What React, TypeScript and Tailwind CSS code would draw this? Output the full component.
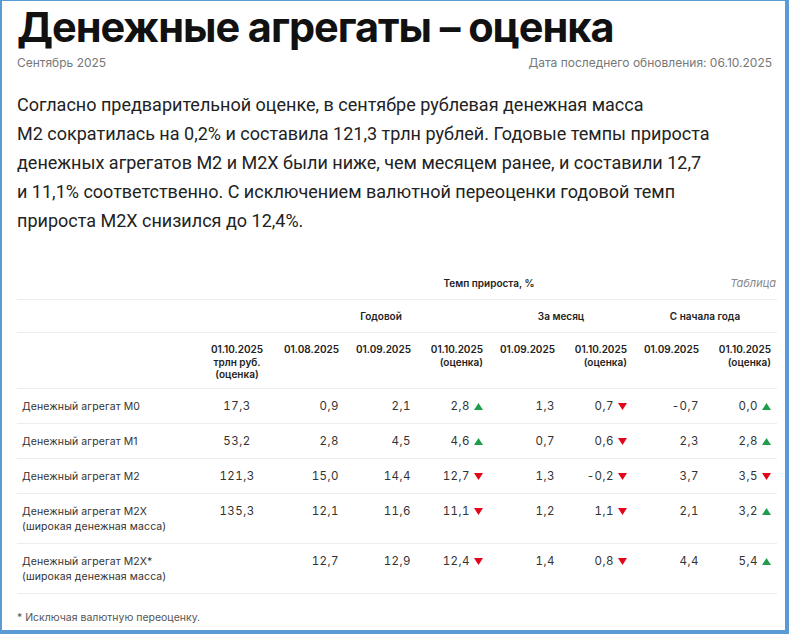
const inter = { fontFamily: 'Inter, "Noto Sans", sans-serif' };
const roboto = { fontFamily: 'Roboto, "Noto Sans", sans-serif' };

function Up() {
  return (
    <svg width="9" height="7" viewBox="0 0 9 7" className="shrink-0">
      <path d="M4.5 0L9 7H0z" fill="#1f9d4c" />
    </svg>
  );
}

function Down() {
  return (
    <svg width="9" height="7" viewBox="0 0 9 7" className="shrink-0">
      <path d="M0 0h9L4.5 7z" fill="#e2061b" />
    </svg>
  );
}

type Cell = { v: string; d?: 'up' | 'down' };

const rows: { label: string[]; cells: Cell[] }[] = [
  {
    label: ['Денежный агрегат М0'],
    cells: [{ v: '17,3' }, { v: '0,9' }, { v: '2,1' }, { v: '2,8', d: 'up' }, { v: '1,3' }, { v: '0,7', d: 'down' }, { v: '-0,7' }, { v: '0,0', d: 'up' }],
  },
  {
    label: ['Денежный агрегат М1'],
    cells: [{ v: '53,2' }, { v: '2,8' }, { v: '4,5' }, { v: '4,6', d: 'up' }, { v: '0,7' }, { v: '0,6', d: 'down' }, { v: '2,3' }, { v: '2,8', d: 'up' }],
  },
  {
    label: ['Денежный агрегат М2'],
    cells: [{ v: '121,3' }, { v: '15,0' }, { v: '14,4' }, { v: '12,7', d: 'down' }, { v: '1,3' }, { v: '-0,2', d: 'down' }, { v: '3,7' }, { v: '3,5', d: 'down' }],
  },
  {
    label: ['Денежный агрегат М2Х', '(широкая денежная масса)'],
    cells: [{ v: '135,3' }, { v: '12,1' }, { v: '11,6' }, { v: '11,1', d: 'down' }, { v: '1,2' }, { v: '1,1', d: 'down' }, { v: '2,1' }, { v: '3,2', d: 'up' }],
  },
  {
    label: ['Денежный агрегат М2Х*', '(широкая денежная масса)'],
    cells: [{ v: '' }, { v: '12,7' }, { v: '12,9' }, { v: '12,4', d: 'down' }, { v: '1,4' }, { v: '0,8', d: 'down' }, { v: '4,4' }, { v: '5,4', d: 'up' }],
  },
];

const dates: string[][] = [
  ['01.10.2025', 'трлн руб.', '(оценка)'],
  ['01.08.2025'],
  ['01.09.2025'],
  ['01.10.2025', '(оценка)'],
  ['01.09.2025'],
  ['01.10.2025', '(оценка)'],
  ['01.09.2025'],
  ['01.10.2025', '(оценка)'],
];

const grid = 'grid grid-cols-[184px_repeat(8,72px)] border-b border-[#ededed]';

export default function App() {
  return (
    <div className="h-[634px] w-[789px] overflow-hidden border-b-4 border-l-2 border-r-4 border-t border-[#5b9bd5] bg-white">
      <div className="pl-[15px] pr-[8px]">
        <h1 className="pt-[5px] text-[41.5px] font-bold leading-[42px] tracking-tight text-[#111]" style={inter}>
          Денежные агрегаты – оценка
        </h1>
        <div className="mt-[7px] flex justify-between pr-[5px] text-[12px] leading-[16px] text-[#777]" style={inter}>
          <span>Сентябрь 2025</span>
          <span>Дата последнего обновления: 06.10.2025</span>
        </div>

        <p className="mt-[19px] text-[18px] leading-[29px] text-[#222]" style={roboto}>
          Согласно предварительной оценке, в сентябре рублевая денежная масса
          <br />
          М2 сократилась на 0,2% и составила 121,3 трлн рублей. Годовые темпы прироста
          <br />
          денежных агрегатов М2 и М2Х были ниже, чем месяцем ранее, и составили 12,7
          <br />
          и 11,1% соответственно. С исключением валютной переоценки годовой темп
          <br />
          прироста М2Х снизился до 12,4%.
        </p>

        <div className="mt-[32px] text-[#333]" style={inter}>
          <div className={`${grid} relative h-[33px] items-center text-[10px] font-semibold text-[#222]`}>
            <div />
            <div className="col-span-8 text-center">Темп прироста, %</div>
            <span className="absolute right-[1px] top-[8px] text-[11px] font-normal italic text-[#888]">Таблица</span>
          </div>
          <div className={`${grid} h-[33px] items-center text-[10px] font-semibold text-[#222]`}>
            <div />
            <div />
            <div className="col-span-3 text-center">Годовой</div>
            <div className="col-span-2 text-center">За месяц</div>
            <div className="col-span-2 text-center">С начала года</div>
          </div>
          <div className={`${grid} h-[56px] pt-[10px] text-[10px] font-semibold leading-[12.5px] text-[#222]`}>
            <div />
            {dates.map((d, i) => (
              <div key={i} className={i === 0 ? 'text-center' : 'pr-[6px] text-right'}>
                {d.map((l) => (
                  <div key={l}>{l}</div>
                ))}
              </div>
            ))}
          </div>
          {rows.map((r) => (
            <div key={r.label[0]} className={`${grid} pb-[9px] pt-[10px] leading-[15px]`}>
              <div className="pl-[5px] text-[10.5px] tracking-[0.01em] text-[#333]">
                {r.label.map((l) => (
                  <div key={l}>{l}</div>
                ))}
              </div>
              {r.cells.map((c, i) => (
                <div
                  key={i}
                  className={`flex h-[15px] items-center gap-[4px] text-[11.5px] tracking-[0.04em] tabular-nums ${i === 0 ? 'justify-center' : 'justify-end pr-[6px]'}`}
                >
                  <span>{c.v}</span>
                  {c.d === 'up' && <Up />}
                  {c.d === 'down' && <Down />}
                </div>
              ))}
            </div>
          ))}
        </div>

        <div className="mt-[16px] text-[10.5px] text-[#555]" style={inter}>
          * Исключая валютную переоценку.
        </div>
      </div>
    </div>
  );
}
